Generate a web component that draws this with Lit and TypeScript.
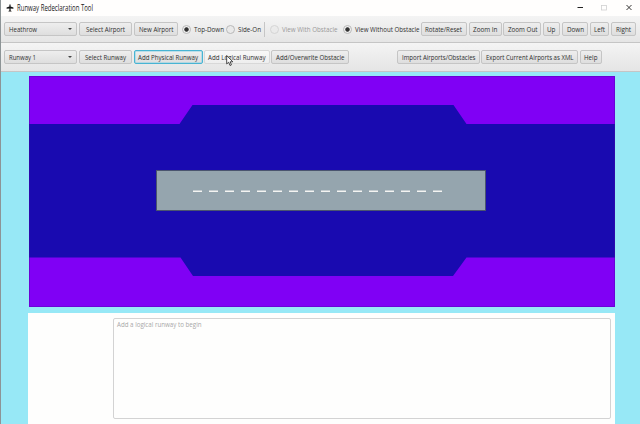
import { LitElement, html, css, svg } from "lit";
import { customElement } from "lit/decorators.js";
import { styleMap } from "lit/directives/style-map.js";

type Kind = "combo" | "button" | "radio" | "separator" | "space";
interface Item {
  kind: Kind;
  width: number;
  label?: string;
  state?: string;
  text?: number;
}

const viewRow: Item[] = [
  { kind: "combo", width: 73, label: "Heathrow", text: 28 },
  { kind: "button", width: 53.5, label: "Select Airport", text: 39 },
  { kind: "button", width: 44, label: "New Airport", text: 34.5 },
  { kind: "radio", width: 44.5, label: "Top-Down", state: "on", text: 30 },
  { kind: "radio", width: 35, label: "Side-On", text: 23 },
  { kind: "separator", width: 4 },
  { kind: "radio", width: 69.2, label: "View With Obstacle", state: "off", text: 55.5 },
  { kind: "radio", width: 80.4, label: "View Without Obstacle", state: "on", text: 64.5 },
  { kind: "button", width: 46.4, label: "Rotate/Reset", text: 37 },
  { kind: "button", width: 33, label: "Zoom In", text: 24.5 },
  { kind: "button", width: 38, label: "Zoom Out", text: 29.5 },
  { kind: "button", width: 17.6, label: "Up", text: 8.5 },
  { kind: "button", width: 26, label: "Down", text: 17 },
  { kind: "button", width: 19.3, label: "Left", text: 11 },
  { kind: "button", width: 25, label: "Right", text: 15 },
];

const runwayRow: Item[] = [
  { kind: "combo", width: 73, label: "Runway 1", text: 27 },
  { kind: "button", width: 53.3, label: "Select Runway", text: 41 },
  { kind: "button", width: 68.8, label: "Add Physical Runway", state: "focused", text: 60 },
  { kind: "button", width: 65.6, label: "Add Logical Runway", state: "hover", text: 57.5 },
  { kind: "button", width: 77.5, label: "Add/Overwrite Obstacle", text: 68.5 },
  { kind: "space", width: 45 },
  { kind: "button", width: 82.6, label: "Import Airports/Obstacles", text: 73.5 },
  { kind: "button", width: 96.6, label: "Export Current Airports as XML", text: 87.5 },
  { kind: "button", width: 22.5, label: "Help", text: 13.5 },
];

const label = (text = "", width = 0) => html`
  <svg class="label" width=${width} height="12">
    <text x="0" y="8.6" textLength=${width} lengthAdjust="spacingAndGlyphs">${text}</text>
  </svg>`;

@customElement("tool-row")
class ToolRow extends LitElement {
  static properties = { items: { attribute: false } };
  declare items: Item[];

  static styles = css`
    :host { display: flex; align-items: center; gap: 1.6px; }
    .item { box-sizing: border-box; flex: none; height: 14px; display: flex; align-items: center; }
    .label { display: block; flex: none; overflow: visible; font: 7.9px "Open Sans", "Noto Sans", sans-serif; fill: #303030; }
    .button, .combo { border: 1px solid #c5c5c5; border-radius: 2px; background: linear-gradient(#eeeeee, #dedede); }
    .button { justify-content: center; }
    .combo { justify-content: space-between; padding: 0 4px 0 3.5px; }
    .arrow { border: 2px solid transparent; border-top: 2.5px solid #444; border-bottom: 0; }
    .focused { border-color: #48b4d3; box-shadow: inset 0 0 0 0.5px #8bd0e4; }
    .hover { background: linear-gradient(#f8f8f8, #eeeeee); border-color: #d8d8d8; }
    .radio { gap: 3px; justify-content: flex-end; }
    .dot { box-sizing: border-box; flex: none; width: 9px; height: 9px; border: 1px solid #b9b9b9; border-radius: 50%; background: #e9e9e9; }
    .on .dot { background: radial-gradient(circle, #333 0 1.8px, #f0f0f0 2.6px); }
    .off { opacity: 0.45; }
    .separator { justify-content: center; }
    .line { width: 1px; height: 15px; background: #c6c6c6; }
  `;

  render() {
    return this.items.map((i) => html`
      <div class="item ${i.kind} ${i.state ?? ""}" style=${styleMap({ width: `${i.width}px` })}>
        ${i.kind === "radio" ? html`<span class="dot"></span>` : ""}
        ${i.label ? label(i.label, i.text) : ""}
        ${i.kind === "combo" ? html`<span class="arrow"></span>` : ""}
        ${i.kind === "separator" ? html`<span class="line"></span>` : ""}
      </div>`);
  }
}

@customElement("app-root")
class AppRoot extends LitElement {
  static styles = css`
    :host { display: flex; flex-direction: column; position: relative; box-sizing: border-box; width: 640px; height: 424px; overflow: hidden; background: #97e8f6; border-left: 1px solid #8d9496; }
    .title { height: 16px; flex: none; display: flex; align-items: center; background: #fffefd; padding-left: 5px; }
    .plane { width: 8px; height: 8px; margin-right: 2.5px; }
    .label { overflow: visible; font: 7.9px "Open Sans", "Noto Sans", sans-serif; fill: #202020; }
    .name { font-size: 8.2px; }
    .controls { width: 56px; height: 8px; margin-left: auto; margin-right: 7px; }
    tool-row { box-sizing: border-box; flex: none; padding-left: 3.4px; border-bottom: 1px solid #c5c5c5; background: linear-gradient(#f4f4f4, #e5e5e5); }
    .view { height: 27px; }
    .runway { height: 29px; }
    .scene { display: block; flex: none; width: 586px; height: 231px; margin: 4px 0 0 28px; }
    .panel { box-sizing: border-box; width: 587px; flex: 1; margin: 6px 0 0 27px; padding: 5px 4.5px 5.5px 85px; background: #fefefd; }
    .notes { box-sizing: border-box; height: 101px; border: 1px solid #d3d3d3; border-radius: 2px; padding: 0 0 0 3px; }
    .prompt { display: block; fill: #a8a8a8; }
    .cursor { position: absolute; left: 225px; top: 55px; width: 8px; height: 11px; }
  `;

  render() {
    const dashes = Array.from({ length: 16 }, (_, n) => 164 + n * 16);
    return html`
      <div class="title">
        <svg class="plane" viewBox="0 0 8 8"><path fill="#151515" d="M3.400 .8Q4 -.2 4.600 .8V2.600L7.400 3.600V4.700L4.600 4.500V6.400L5.500 7V7.600H2.500V7L3.400 6.400V4.500L.6 4.700V3.600L3.400 2.600Z"/></svg>
        <svg class="label name" width="76" height="12"><text x="0" y="8.500" textLength="76" lengthAdjust="spacingAndGlyphs">Runway Redeclaration Tool</text></svg>
        <svg class="controls" viewBox="0 0 56 8" fill="none">
          <path d="M.5 3.500H6" stroke="#222"/>
          <rect x="24.500" y="1.500" width="5" height="4.500" stroke="#d0d0d0" stroke-width=".8"/>
          <path d="M49.500 1L54.500 6M54.500 1L49.500 6" stroke="#222" stroke-width=".9"/>
        </svg>
      </div>
      <tool-row class="view" .items=${viewRow}></tool-row>
      <tool-row class="runway" .items=${runwayRow}></tool-row>
      <svg class="scene" viewBox="0 0 586 231">
        <rect width="586" height="231" fill="#8000f5"/>
        <path fill="#190ab0" d="M0 48H150.500L163.500 29H424.500L437.500 48H586V181.500H437.500L424 200H164L151.500 181.500H0Z"/>
        <rect x="0.500" y="0.500" width="585" height="230" fill="none" stroke="#4c05a8" stroke-opacity=".4"/>
        <rect x="127.500" y="94.500" width="329" height="40" fill="#95a5ae" stroke="#4a5668" stroke-width=".9"/>
        ${dashes.map((x) => svg`<rect x=${x} y="114.500" width="9" height="1.500" fill="#f4f4f2"/>`)}
      </svg>
      <div class="panel">
        <div class="notes">
          <svg class="label prompt" width="84.500" height="12"><text x="0" y="8" textLength="84.500" lengthAdjust="spacingAndGlyphs">Add a logical runway to begin</text></svg>
        </div>
      </div>
      <svg class="cursor" viewBox="0 0 8 11"><path d="M.7 .5V8.900L2.700 7.200L4 10.500L5.400 9.900L4.200 6.800H6.800Z" fill="#fff" stroke="#222" stroke-width=".8"/></svg>
    `;
  }
}
